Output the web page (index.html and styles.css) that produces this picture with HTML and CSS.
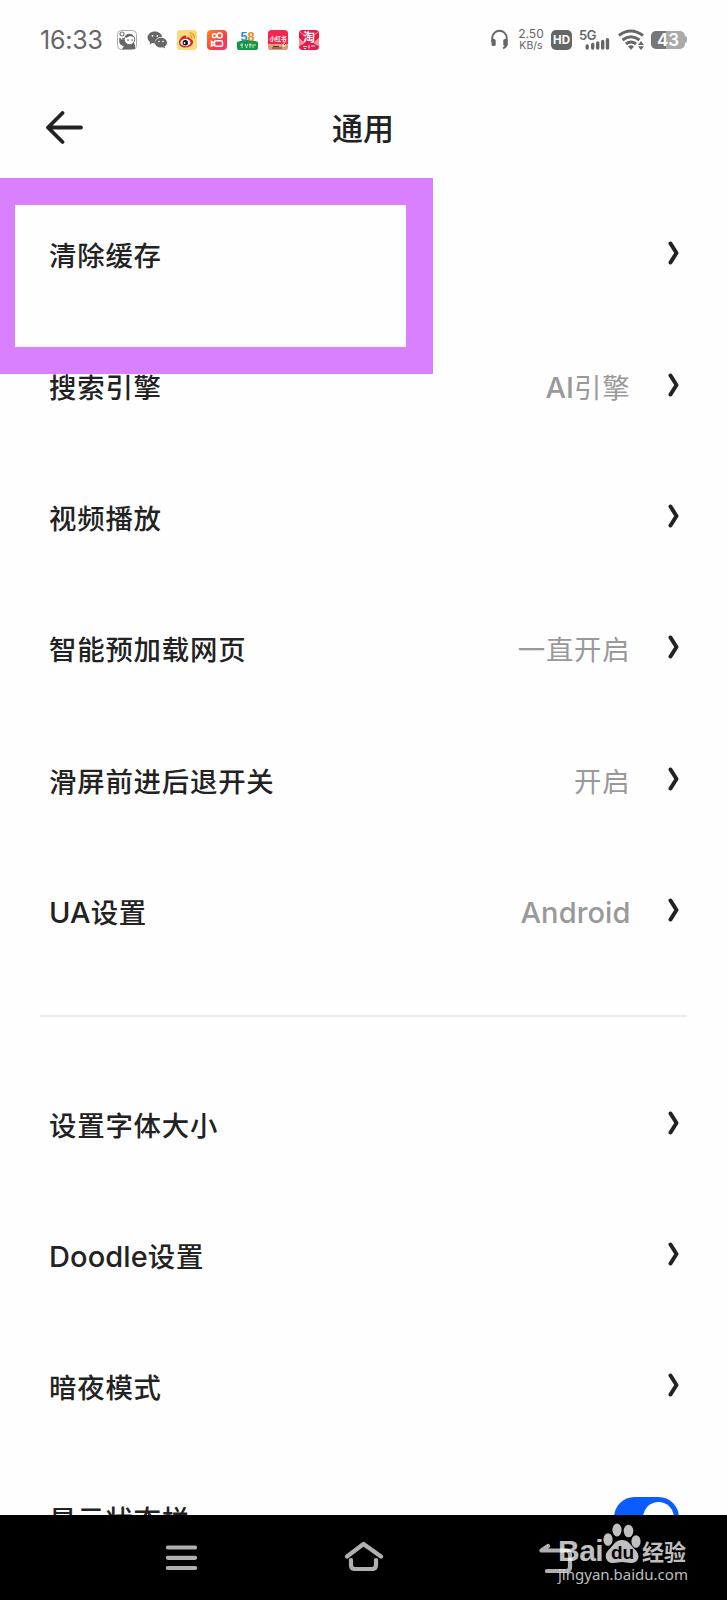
FILE: index.html
```html
<!DOCTYPE html>
<html lang="zh-CN">
<head>
    <meta charset="UTF-8">
    <title>通用</title>
    <link rel="stylesheet" href="styles.css">
</head>
<body>
    <div class="screen">
        <div class="status-bar">
            <span class="time">16:33</span>
            <div class="app-icons">
                <svg width="20" height="20" viewBox="0 0 20 20">
                    <rect x="0.5" y="0.5" width="19" height="19" rx="4" fill="#fff" stroke="#aaa"/>
                    <circle cx="5" cy="4" r="2" fill="none" stroke="#777" stroke-width="1.2"/>
                    <path d="M3 9q-1 6 4 7l-2 3h13v-4q-1-3-3-3" fill="#666"/>
                    <path d="M3 8v4q1 3 4 3M6 8v3" fill="none" stroke="#666" stroke-width="1.5"/>
                    <circle cx="12.5" cy="9.5" r="5.2" fill="#fff" stroke="#666"/>
                    <path d="M8 6q5-5 9 1l-4-1-4 2z" fill="#666"/>
                    <path d="M10 10h2M14 10h2" stroke="#666"/>
                </svg>
                <svg width="20" height="20" viewBox="0 0 20 20">
                    <path d="M8 1.5c-4.400 0-7.500 2.700-7.500 6 0 1.900 1 3.500 2.700 4.600L2.500 14.500l2.800-1.400 2.700.4C7.500 9.500 10.800 6.600 15.300 6.800 14.500 3.800 11.700 1.500 8 1.500z" fill="#666"/>
                    <path d="M14 7.800c-3.300 0-6 2.200-6 5s2.700 4.800 6 4.800l2-.3 2.200 1.200-.6-1.900c1.500-.9 2.400-2.200 2.400-3.800 0-2.800-2.700-5-6-5z" fill="#666"/>
                    <circle cx="5.5" cy="5.8" r="0.9" fill="#fff"/>
                    <circle cx="10.3" cy="5.8" r="0.9" fill="#fff"/>
                    <circle cx="12" cy="11.5" r="0.8" fill="#fff"/>
                    <circle cx="16" cy="11.5" r="0.8" fill="#fff"/>
                </svg>
                <svg width="20" height="20" viewBox="0 0 20 20">
                    <rect width="20" height="20" rx="3" fill="#fbdc7c"/>
                    <path d="M2 12.500C2 9 6 5 8.500 5.500q1.200.5.500 2.300 4-1.500 4.500 1 3 1.300 2.500 4c-.7 3-4 4.700-7.500 4.700S2 15.500 2 12.500z" fill="#d8232a"/>
                    <ellipse cx="8.5" cy="12.5" rx="5" ry="3.7" fill="#fff"/>
                    <circle cx="8.3" cy="12.7" r="2.7" fill="#111"/>
                    <circle cx="7.6" cy="13" r="0.9" fill="#fff"/>
                    <path d="M12.500 3q5 0 5 5.500M12.800 5.700q2.200 0 2.200 2.500" fill="none" stroke="#f29a1f" stroke-width="1.3"/>
                </svg>
                <svg width="20" height="20" viewBox="0 0 20 20">
                    <defs>
                        <linearGradient id="ks" x1="0" y1="0" x2="1" y2="1">
                            <stop offset="0" stop-color="#ff8a1c"/>
                            <stop offset="0.6" stop-color="#fb3b45"/>
                            <stop offset="1" stop-color="#f5336a"/>
                        </linearGradient>
                    </defs>
                    <rect width="20" height="20" rx="4" fill="url(#ks)"/>
                    <g fill="none" stroke="#fff" stroke-width="1.5">
                        <circle cx="7.5" cy="5.8" r="2"/>
                        <circle cx="12.7" cy="5.5" r="2.5"/>
                        <rect x="7.5" y="10.7" width="8" height="5.5" rx="1.5"/>
                        <path d="M7.500 13l-3-1.500v4.500l3-1.500"/>
                    </g>
                </svg>
                <svg width="21" height="20" viewBox="0 0 21 20">
                    <path d="M0 12q10-4 21 0v6q0 2-2 2H2q-2 0-2-2z" fill="#139447"/>
                    <text class="logo-58" x="3.5" y="11" fill="#2a8fd0">5</text>
                    <text class="logo-58" x="10.5" y="11" fill="#ef8624">8</text>
                    <path d="M3 15h3M5 13v5M8 14l2 4M11 14l-2 4M12 15h3M13 13v5M16 14v4M17 15h2" stroke="#c5ecc9" fill="none"/>
                </svg>
                <svg width="20" height="20" viewBox="0 0 20 20">
                    <rect width="20" height="20" rx="3.5" fill="#f4284e"/>
                    <path d="M0 14h20v2.500q0 3.500-3.500 3.500h-13Q0 20 0 16.500z" fill="#d9a17c"/>
                    <text class="logo-xhs" x="1.5" y="10.5">小红书</text>
                    <path d="M4 18h10M5 16.500h6" stroke="#633"/>
                    <path d="M14 16l3-4 1 2-2 3z" fill="#eed"/>
                    <path d="M16 15l2-2" stroke="#533"/>
                </svg>
                <svg width="20" height="20" viewBox="0 0 20 20">
                    <rect width="20" height="20" rx="3.5" fill="#ee174b"/>
                    <path d="M0 8l5 5-5 3zM20 8l-5 5 5 3zM1 2l4 3M19 2l-4 3" fill="#e98bd0" stroke="#f4a15e"/>
                    <text class="logo-tao" x="4" y="12">淘</text>
                    <path d="M4 16.500h4M10 15v3.500M12 16h4M5 18.500h2" stroke="#fff"/>
                </svg>
            </div>
            <div class="system-icons">
                <svg class="headset" width="17" height="21" viewBox="0 0 17 21">
                    <path d="M1.300 13V9a7.200 7.200 0 0 1 14.400 0v5.500q0 3.500-3.700 4.800" fill="none" stroke="#666" stroke-width="2"/>
                    <rect x="0.5" y="10" width="4.2" height="7" rx="1.5" fill="#666"/>
                    <rect x="12.3" y="10" width="4.2" height="7" rx="1.5" fill="#666"/>
                </svg>
                <div class="speed">
                    <span>2.50</span>
                    <span>KB/s</span>
                </div>
                <span class="hd">HD</span>
                <svg class="signal" width="31" height="21" viewBox="0 0 31 21">
                    <text class="signal-label" x="-1" y="11">5G</text>
                    <path d="M7.200 17v2M12.700 15.500v3.500M17.700 14v5M22.700 12.500V19M27.500 10.800V19" fill="none" stroke="#666" stroke-width="3.4" stroke-linecap="round"/>
                </svg>
                <svg class="wifi" width="27" height="21" viewBox="0 0 27 21">
                    <g fill="none" stroke="#666" stroke-width="3">
                        <path d="M1 6.500q11.500-9 24 0"/>
                        <path d="M4.500 11q8.500-6.500 17 0"/>
                        <path d="M8 15q5-4 10 0"/>
                    </g>
                    <path d="M10 17.500q3-2.300 6 0l-3 3.300z" fill="#666"/>
                    <path d="M20 16l3-4 3 4zM20 17.200l3 3.800 3-3.800z" fill="#666"/>
                </svg>
                <div class="battery">
                    <span class="battery-body">43</span>
                    <span class="battery-cap"></span>
                </div>
            </div>
        </div>

        <header>
            <svg class="back" width="38" height="34" viewBox="0 0 38 34">
                <path d="M17.500 2L3 16.500 17.500 31M3 16.500h33" fill="none" stroke="#222" stroke-width="3.8" stroke-linecap="round" stroke-linejoin="round"/>
            </svg>
            <h1>通用</h1>
        </header>

        <div class="settings">
            <div class="highlight"></div>
            <ul>
                <li>
                    <span class="name">清除缓存</span>
                    <svg class="arrow" width="11" height="24" viewBox="0 0 11 24"><path d="M2.500 2.500l6 9.500-6 9.500"/></svg>
                </li>
                <li>
                    <span class="name">搜索引擎</span>
                    <span class="value"><span class="latin">AI</span>引擎</span>
                    <svg class="arrow" width="11" height="24" viewBox="0 0 11 24"><path d="M2.500 2.500l6 9.500-6 9.500"/></svg>
                </li>
                <li>
                    <span class="name">视频播放</span>
                    <svg class="arrow" width="11" height="24" viewBox="0 0 11 24"><path d="M2.500 2.500l6 9.500-6 9.500"/></svg>
                </li>
                <li>
                    <span class="name">智能预加载网页</span>
                    <span class="value">一直开启</span>
                    <svg class="arrow" width="11" height="24" viewBox="0 0 11 24"><path d="M2.500 2.500l6 9.500-6 9.500"/></svg>
                </li>
                <li>
                    <span class="name">滑屏前进后退开关</span>
                    <span class="value">开启</span>
                    <svg class="arrow" width="11" height="24" viewBox="0 0 11 24"><path d="M2.500 2.500l6 9.500-6 9.500"/></svg>
                </li>
                <li>
                    <span class="name"><span class="latin">UA</span>设置</span>
                    <span class="value"><span class="latin">Android</span></span>
                    <svg class="arrow" width="11" height="24" viewBox="0 0 11 24"><path d="M2.500 2.500l6 9.500-6 9.500"/></svg>
                </li>
            </ul>
            <hr>
            <ul>
                <li>
                    <span class="name">设置字体大小</span>
                    <svg class="arrow" width="11" height="24" viewBox="0 0 11 24"><path d="M2.500 2.500l6 9.500-6 9.500"/></svg>
                </li>
                <li>
                    <span class="name"><span class="latin">Doodle</span>设置</span>
                    <svg class="arrow" width="11" height="24" viewBox="0 0 11 24"><path d="M2.500 2.500l6 9.500-6 9.500"/></svg>
                </li>
                <li>
                    <span class="name">暗夜模式</span>
                    <svg class="arrow" width="11" height="24" viewBox="0 0 11 24"><path d="M2.500 2.500l6 9.500-6 9.500"/></svg>
                </li>
                <li>
                    <span class="name">显示状态栏</span>
                    <span class="toggle"></span>
                </li>
            </ul>
        </div>

        <div class="nav-bar">
            <svg width="31" height="26" viewBox="0 0 31 26">
                <path d="M2 2.500h27M2 12.800h27M2 23h27"/>
            </svg>
            <svg width="40" height="30" viewBox="0 0 40 30">
                <path d="M3 15.500L19.500 3 37 15.500M7 19v5q0 4 4 4h17q4 0 4-4v-5"/>
            </svg>
            <svg width="34" height="30" viewBox="0 0 34 30">
                <path d="M9 3L2.500 7.500H27q4 0 4 4V24q0 4-4 4H8"/>
            </svg>
            <div class="watermark">
                <div class="brand">
                    <span class="bai">Bai</span>
                    <svg width="39" height="42" viewBox="0 0 39 42">
                        <ellipse cx="5" cy="17.5" rx="4.6" ry="6.3"/>
                        <ellipse cx="14" cy="8" rx="4.6" ry="6.5"/>
                        <ellipse cx="25.5" cy="9" rx="4.8" ry="6.3"/>
                        <ellipse cx="33" cy="19.5" rx="4.6" ry="6.3"/>
                        <path d="M19 18c-7 0-9 6-13 9.500-6 5.500-3 13.500 4 13.500 4 0 6-1 9-1s5 1 9 1c8 0 10-8 4-13.500C28 24 26 18 19 18z"/>
                        <text class="du" x="8" y="37">du</text>
                    </svg>
                    <span class="jingyan">经验</span>
                </div>
                <div class="site">jingyan.baidu.com</div>
            </div>
        </div>
    </div>
</body>
</html>
```
FILE: styles.css
```css
* {
    box-sizing: border-box;
}
body {
    margin: 0;
    background: #fff;
    font-family: Inter, "Noto Sans CJK SC", sans-serif;
    color: #222;
}
.screen {
    width: 727px;
    height: 1600px;
    display: flex;
    flex-direction: column;
    overflow: hidden;
    background: #fefefe;
}

/* status bar */
.status-bar {
    height: 79px;
    flex: none;
    display: flex;
    align-items: center;
    padding: 0 40px;
    color: #666;
}
.time {
    width: 77px;
    font-size: 25px;
    line-height: 30px;
    letter-spacing: -0.2px;
    white-space: nowrap;
}
.app-icons {
    display: flex;
    gap: 10.1px;
}
.app-icons svg {
    flex: none;
}
.logo-58 {
    font: bold 12.5px "Liberation Sans", sans-serif;
}
.logo-xhs {
    font: bold 5.7px "Noto Sans CJK SC", sans-serif;
    fill: #fff;
}
.logo-tao {
    font: bold 12px "Noto Sans CJK SC", sans-serif;
    fill: #fff;
}
.system-icons {
    display: flex;
    align-items: center;
    margin-left: auto;
}
.speed {
    display: flex;
    flex-direction: column;
    width: 26px;
    margin: 0 8px 0 10px;
    font-size: 12px;
    line-height: 12px;
    text-align: center;
    white-space: nowrap;
}
.speed span:last-child {
    font-size: 10.5px;
}
.hd {
    width: 21px;
    height: 20px;
    margin-left: -1px;
    border-radius: 5px;
    background: #666;
    color: #fff;
    font-size: 11.5px;
    font-weight: bold;
    line-height: 20px;
    text-align: center;
}
.signal {
    margin-left: 8px;
    overflow: visible;
}
.signal-label {
    font: 600 13px Inter, sans-serif;
    fill: #666;
    letter-spacing: -0.5px;
}
.wifi {
    margin-left: 7px;
}
.battery {
    display: flex;
    align-items: center;
    margin-left: 6px;
}
.battery-body {
    width: 34px;
    height: 18px;
    border-radius: 5px;
    background: linear-gradient(to right, #777 43%, #aaa 43%);
    color: #fff;
    font-size: 17px;
    font-weight: 600;
    line-height: 18px;
    text-align: center;
}
.battery-cap {
    width: 2px;
    height: 7px;
    border-radius: 0 2px 2px 0;
    background: #aaa;
}

/* title */
header {
    height: 98px;
    flex: none;
    display: grid;
    grid-template-columns: 1fr auto 1fr;
    align-items: center;
    padding: 0 46px 0 45px;
}
header h1 {
    margin: 0;
    padding-top: 2px;
    font-size: 31px;
    font-weight: 500;
    line-height: 40px;
}

/* list */
.settings {
    position: relative;
    flex: 1;
    min-height: 0;
    overflow: hidden;
    padding-top: 11px;
}
.settings ul {
    list-style: none;
    margin: 0;
    padding: 0 48px 0 49px;
}
.settings li {
    height: 131.4px;
    display: flex;
    align-items: center;
    font-size: 27.4px;
    letter-spacing: 0.8px;
    line-height: 40px;
}
.settings .name,
.settings .value {
    padding-top: 5px;
}
.settings .name {
    font-weight: 500;
}
.settings .value {
    margin-left: auto;
    color: #999;
}
.latin {
    font-size: 29px;
    font-weight: 450;
    letter-spacing: 0.1px;
}
.arrow {
    margin-left: auto;
    margin-bottom: 1px;
}
.value + .arrow {
    margin-left: 37.5px;
}
.arrow path {
    fill: none;
    stroke: #222;
    stroke-width: 4;
    stroke-linecap: round;
    stroke-linejoin: round;
}
.settings hr {
    height: 2px;
    margin: 39px 40px 40px;
    border: none;
    background: #ebebeb;
}
.toggle {
    width: 65px;
    height: 41px;
    margin-left: auto;
    padding: 5px;
    border-radius: 21px;
    background: #0a5cff;
}
.toggle::after {
    content: "";
    display: block;
    width: 31px;
    height: 31px;
    margin-left: auto;
    border-radius: 50%;
    background: #fff;
}
.highlight {
    position: absolute;
    left: 0;
    top: 1px;
    width: 433px;
    height: 196px;
    border: solid #d980ff;
    border-width: 27px 27px 27px 15px;
}

/* bottom navigation */
.nav-bar {
    position: relative;
    height: 85px;
    flex: none;
    display: flex;
    align-items: center;
    padding-left: 166px;
    background: #000;
}
.nav-bar > svg {
    flex: none;
    fill: none;
    stroke: #b0b0b0;
    stroke-width: 4.2;
    stroke-linecap: round;
    stroke-linejoin: round;
}
.nav-bar > svg:nth-child(2) {
    margin: 0 155px 4px 147px;
}
.watermark {
    position: absolute;
    left: 558px;
    top: 7px;
    color: rgba(255, 255, 255, 0.75);
}
.brand {
    display: flex;
    align-items: flex-end;
    height: 42px;
}
.brand svg {
    flex: none;
    fill: #c0c0c0;
}
.bai {
    width: 45px;
    font: bold 30px/26px "Liberation Sans", sans-serif;
    letter-spacing: -0.5px;
}
.du {
    font: bold 19px "Liberation Sans", sans-serif;
    fill: #000;
}
.jingyan {
    font-size: 22px;
    font-weight: bold;
    line-height: 24px;
}
.site {
    font: 15px/20px "Noto Sans", sans-serif;
    white-space: nowrap;
}
```
